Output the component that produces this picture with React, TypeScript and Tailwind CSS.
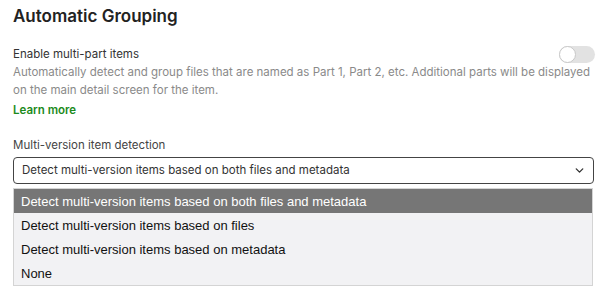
import { ChevronDown } from "lucide-react";

const options = [
  "Detect multi-version items based on both files and metadata",
  "Detect multi-version items based on files",
  "Detect multi-version items based on metadata",
  "None",
];

export default function App() {
  return (
    <div className="w-[607px] h-[296px] bg-white px-[13px] pt-[4px] font-['Inter',sans-serif] overflow-hidden">
      <h1 className="text-[17px] leading-[24px] font-semibold text-[#222]">Automatic Grouping</h1>

      {/* multi-part toggle */}
      <div className="mt-[17px] flex items-center justify-between">
        <span className="text-[11.5px] leading-[18px] text-[#333]">Enable multi-part items</span>
        <div className="w-[36px] h-[17px] rounded-full bg-[#e2e2e2] flex items-center mr-[-1px]">
          <div className="w-[17px] h-[17px] rounded-full bg-white border border-[#c8c8c8]" />
        </div>
      </div>
      <p className="text-[11.5px] leading-[18px] text-[#8a8a8a]">
        Automatically detect and group files that are named as Part 1, Part 2, etc. Additional parts will be displayed
        on the main detail screen for the item.
      </p>
      <a className="block mt-[2px] text-[11.5px] leading-[18px] font-semibold text-[#1b8a1b]">Learn more</a>

      {/* version detection */}
      <div className="mt-[17px] text-[11.5px] leading-[18px] text-[#444]">Multi-version item detection</div>
      <div className="mt-[3px] h-[27px] border border-[#444] rounded-[4px] flex items-center justify-between pl-[8px] pr-[7px]">
        <span className="text-[11.5px] text-[#333]">{options[0]}</span>
        <ChevronDown size={13} strokeWidth={2.5} className="text-[#333]" />
      </div>
      <div className="mt-[4px] mr-[1px] border border-[#d4d4d4] bg-[#f2f2f4] font-['Liberation_Sans',Arial,sans-serif]">
        {options.map((o, i) => (
          <div
            key={o}
            className={
              i === 0
                ? "h-[24px] px-[7px] pt-[1px] flex items-center text-[13px] bg-[#767676] text-white"
                : "h-[24px] px-[7px] pt-[2px] flex items-center text-[13px] text-[#111]"
            }
          >
            {o}
          </div>
        ))}
      </div>
    </div>
  );
}
